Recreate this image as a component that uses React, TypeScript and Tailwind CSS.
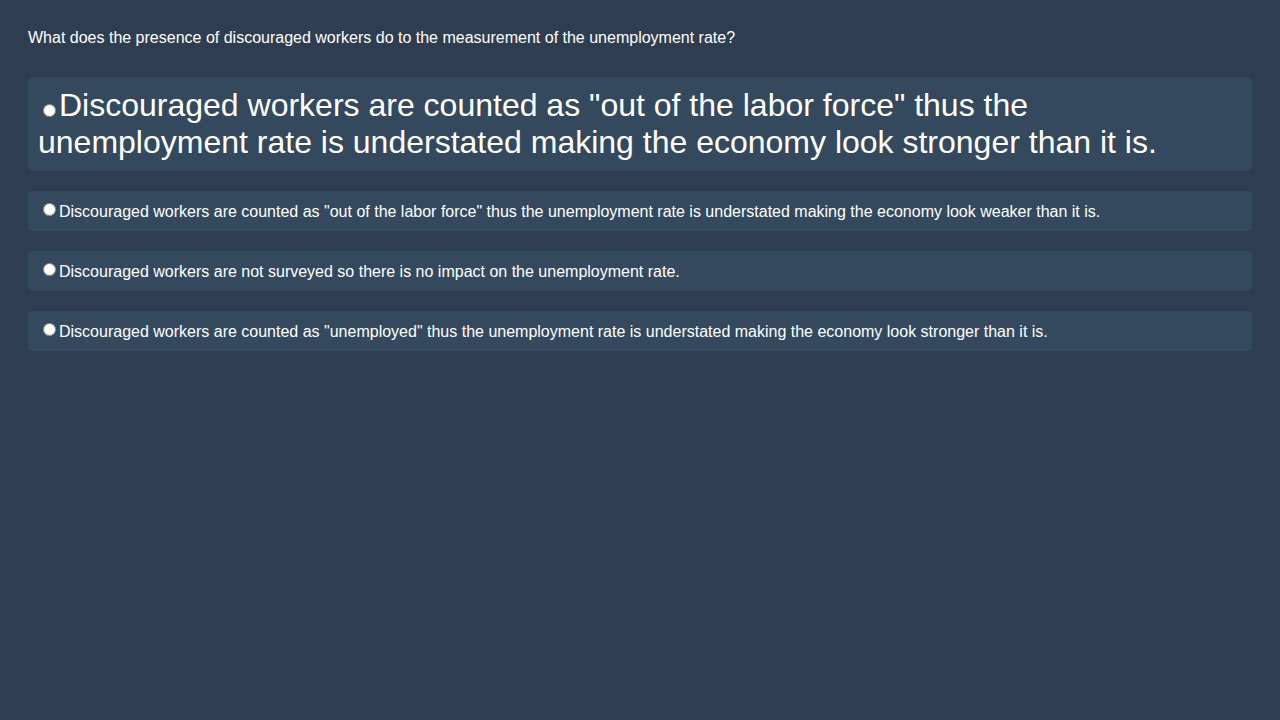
const options = [
  { text: 'Discouraged workers are counted as "out of the labor force" thus the unemployment rate is understated making the economy look stronger than it is.', big: true },
  { text: 'Discouraged workers are counted as "out of the labor force" thus the unemployment rate is understated making the economy look weaker than it is.', big: false },
  { text: "Discouraged workers are not surveyed so there is no impact on the unemployment rate.", big: false },
  { text: 'Discouraged workers are counted as "unemployed" thus the unemployment rate is understated making the economy look stronger than it is.', big: false },
];

export default function App() {
  return (
    <div className="min-h-screen bg-[#2e3d50] px-7 pt-[29px] text-white" style={{ fontFamily: '"Liberation Sans", Arial, sans-serif' }}>
      <p className="text-base leading-[18px]">What does the presence of discouraged workers do to the measurement of the unemployment rate?</p>
      <div className="mt-[30px] flex flex-col gap-5">
        {options.map((o, i) => (
          <label key={i} className={`block rounded bg-[#34495e] px-[10px] ${o.big ? "py-[10px] text-[32px] leading-[37px]" : "pt-[11px] pb-[9px] text-base leading-5"}`}>
            <input type="radio" name="q" className={`ml-[5px] mr-[3px] h-[13px] w-[13px] ${o.big ? "align-[-1px]" : "align-[1px]"}`} />
            {o.text}
          </label>
        ))}
      </div>
    </div>
  );
}
